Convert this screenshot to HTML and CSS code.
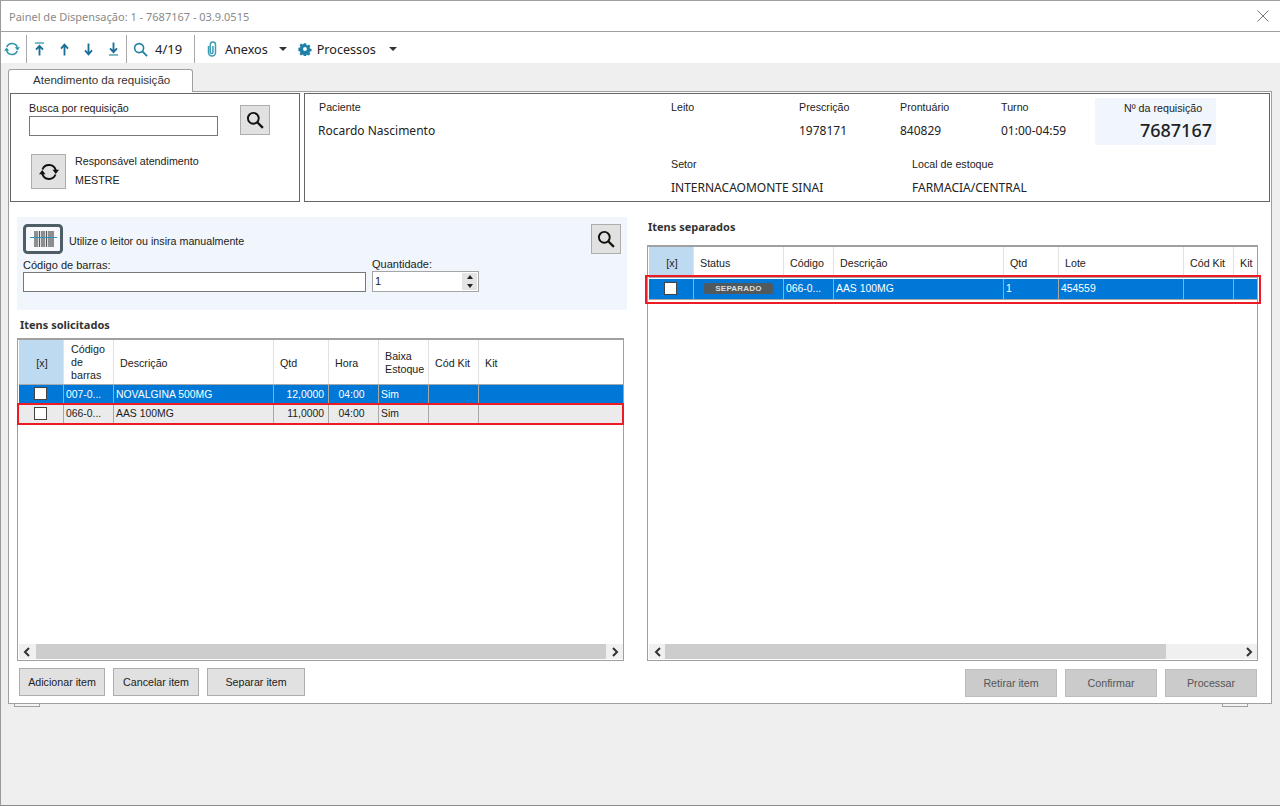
FILE: index.html
```html
<!DOCTYPE html>
<html lang="pt">
<head>
<meta charset="utf-8">
<title>Painel de Dispensação</title>
<link rel="stylesheet" href="styles.css">
</head>
<body>
<svg class="defs" width="0" height="0" aria-hidden="true">
  <defs>
    <symbol id="sync" viewBox="0 0 16 16"><path d="M2.8 6A5.6 5.6 0 0 1 13.4 6.6M13.2 10A5.6 5.6 0 0 1 2.6 9.4" fill="none" stroke="currentColor" stroke-width="1.6"/><path d="M10.8 6.2h5.2L13.4 9.6zM0 9.8h5.2L2.6 6.4z" fill="currentColor"/></symbol>
    <symbol id="glass" viewBox="0 0 16 16"><circle cx="6.5" cy="6.5" r="4.8" fill="none" stroke="currentColor" stroke-width="1.7"/><path d="M10 10l5 5" stroke="currentColor" stroke-width="2"/></symbol>
    <symbol id="chev-l" viewBox="0 0 8 10"><path d="M6 1L2 5l4 4" fill="none" stroke="currentColor" stroke-width="2"/></symbol>
    <symbol id="chev-r" viewBox="0 0 8 10"><path d="M2 1l4 4-4 4" fill="none" stroke="currentColor" stroke-width="2"/></symbol>
  </defs>
</svg>
<div class="window">
  <header class="titlebar">
    <span class="title">Painel de Dispensação: 1 - 7687167 - 03.9.0515</span>
    <svg class="close" width="12" height="12" viewBox="0 0 12 12"><path d="M.5.5l11 11M11.5.5l-11 11" stroke="#777" fill="none"/></svg>
  </header>
  <nav class="toolbar">
    <div class="tool-group tg-sync"><svg class="ti ti-sync"><use href="#sync"/></svg></div>
    <div class="tool-group tg-nav">
      <svg class="ti-nav" viewBox="0 0 12 16"><path d="M1 1.5h10" stroke="#3b93a8" stroke-width="1.4"/><path d="M6 15V5.5M2.2 8.8L6 4.6l3.8 4.2" fill="none" stroke="#1a6f96" stroke-width="2"/></svg>
      <svg class="ti-nav"  viewBox="0 0 12 16"><path d="M6 15V4M2.2 7.6L6 3.2l3.8 4.4" fill="none" stroke="#1a6f96" stroke-width="2"/></svg>
      <svg class="ti-nav" viewBox="0 0 12 16"><path d="M6 2v11M2.2 9.4L6 13.8l3.8-4.4" fill="none" stroke="#1a6f96" stroke-width="2"/></svg>
      <svg class="ti-nav" viewBox="0 0 12 16"><path d="M6 1v9.5M2.2 7.2L6 11.4l3.8-4.2" fill="none" stroke="#1a6f96" stroke-width="2"/><path d="M1 14.5h10" stroke="#3b93a8" stroke-width="1.4"/></svg>
    </div>
    <div class="tool-group tg-find"><svg class="ti ti-glass"><use href="#glass"/></svg><span class="count">4/19</span></div>
    <div class="tool-group tg-menu">
      <svg class="clip" viewBox="0 0 12 16"><path d="M2.5 5v6.5a3.5 3.5 0 0 0 7 0V3.6a2.6 2.6 0 0 0-5.2 0v7.6a1.3 1.3 0 0 0 2.6 0V5" fill="none" stroke="#3d9db4" stroke-width="1.5"/></svg>
      <span class="menu-label">Anexos</span><i class="caret"></i>
      <svg class="gear" viewBox="0 0 16 16"><path fill-rule="evenodd" fill="#1f80a8" d="M6.6 1h2.8l.4 2 1.3.6 1.8-1.1 1.9 2-1.1 1.7.5 1.3 2 .5v2.8l-2 .4-.6 1.3 1.1 1.8-2 1.9-1.7-1.1-1.3.5-.5 2H6.6l-.4-2-1.3-.6-1.8 1.1-1.9-2 1.1-1.7-.5-1.3-2-.5V6.6l2-.4.6-1.3L1.3 3.1l2-1.9L5 2.3l1.3-.5zM8 5.6a2.4 2.4 0 1 0 0 4.8 2.4 2.4 0 0 0 0-4.8z" transform="translate(.6 .6) scale(.92)"/></svg>
      <span class="menu-label">Processos</span><i class="caret caret-last"></i>
    </div>
  </nav>
  <div class="workspace">
    <div class="tabstrip"><div class="tab">Atendimento da requisição</div></div>
    <section class="tabpage">
      <div class="info-row">
        <div class="box box-search">
          <div class="search-row">
            <label class="field-search">
              <span class="lbl">Busca por requisição</span>
              <span class="input input-req"></span>
            </label>
            <button class="icon-btn btn-search-req"><svg class="bi"><use href="#glass"/></svg></button>
          </div>
          <div class="resp-row">
            <button class="icon-btn btn-refresh"><svg class="bi-sync"><use href="#sync"/></svg></button>
            <div class="resp-text"><span>Responsável atendimento</span><span>MESTRE</span></div>
          </div>
        </div>
        <div class="box box-patient">
          <div class="pt-row">
            <div class="pt pt-name"><span class="pad1">Paciente</span><b class="val">Rocardo Nascimento</b></div>
            <div class="pt pt-leito"><span>Leito</span></div>
            <div class="pt pt-presc"><span>Prescrição</span><b class="val">1978171</b></div>
            <div class="pt pt-pront"><span>Prontuário</span><b class="val">840829</b></div>
            <div class="pt pt-turno"><span>Turno</span><b class="val">01:00-04:59</b></div>
            <div class="req-box"><span>Nº da requisição</span><strong>7687167</strong></div>
          </div>
          <div class="pt-row pt-row2">
            <div class="pt pt-setor"><span>Setor</span><b class="val">INTERNACAOMONTE SINAI</b></div>
            <div class="pt"><span>Local de estoque</span><b class="val">FARMACIA/CENTRAL</b></div>
          </div>
        </div>
      </div>
      <div class="columns">
        <div class="col-left">
          <div class="scan-panel">
            <div class="scan-head">
              <svg class="barcode" viewBox="0 0 40 30"><rect x="1.5" y="1.5" width="37" height="27" rx="3" fill="#f7f9fc" stroke="#4d5e66" stroke-width="3"/><path d="M12 7v16M14 7v16M16.5 7v16M19 7v16M21 7v16M23.5 7v16M26 7v16M28 7v16M30 7v16" stroke="#555" stroke-width="1.3"/><path d="M7 13.5h27" stroke="#2f93b5"/></svg>
              <span class="scan-hint">Utilize o leitor ou insira manualmente</span>
              <button class="icon-btn btn-search-scan"><svg class="bi"><use href="#glass"/></svg></button>
            </div>
            <div class="scan-fields">
              <label class="f-code"><span>Código de barras:</span><span class="input input-code"></span></label>
              <label class="f-qty"><span>Quantidade:</span>
                <span class="input input-qty">1<span class="spin"><i class="sp sp-up"></i><i class="sp sp-down"></i></span></span>
              </label>
            </div>
          </div>
          <h2 class="sec sec-left">Itens solicitados</h2>
          <div class="grid grid-left">
            <div class="gh gl"><span class="chk-h">[x]</span><span class="t2">Código de barras</span><span>Descrição</span><span>Qtd</span><span>Hora</span><span class="t3">Baixa Estoque</span><span>Cód Kit</span><span>Kit</span></div>
            <div class="gr gl sel"><span class="cc"><i class="cb"></i></span><span>007-0...</span><span>NOVALGINA 500MG</span><span class="r">12,0000</span><span class="c">04:00</span><span>Sim</span><span></span><span></span></div>
            <div class="gr gl alt mark"><span class="cc"><i class="cb"></i></span><span>066-0...</span><span>AAS 100MG</span><span class="r">11,0000</span><span class="c">04:00</span><span>Sim</span><span></span><span></span></div>
            <div class="gfill"></div>
            <div class="hs hs-left"><span class="ar"><svg class="chev"><use href="#chev-l"/></svg></span><span class="thumb"></span><span class="ar"><svg class="chev"><use href="#chev-r"/></svg></span></div>
          </div>
          <div class="btns">
            <button class="btn w86">Adicionar item</button>
            <button class="btn w86">Cancelar item</button>
            <button class="btn w98">Separar item</button>
          </div>
        </div>
        <div class="col-right">
          <h2 class="sec sec-right">Itens separados</h2>
          <div class="grid grid-right">
            <div class="gh gs"><span class="chk-h">[x]</span><span>Status</span><span>Código</span><span>Descrição</span><span>Qtd</span><span>Lote</span><span>Cód Kit</span><span>Kit</span></div>
            <div class="gr gs sel mark mark-s"><span class="cc"><i class="cb"></i></span><span class="cc"><em class="badge">SEPARADO</em></span><span>066-0...</span><span>AAS 100MG</span><span>1</span><span>454559</span><span></span><span></span></div>
            <div class="gfill"></div>
            <div class="hs hs-right"><span class="ar"><svg class="chev"><use href="#chev-l"/></svg></span><span class="thumb"></span><span class="ar"><svg class="chev"><use href="#chev-r"/></svg></span></div>
          </div>
          <div class="btns btns-right">
            <button class="btn off">Retirar item</button>
            <button class="btn off">Confirmar</button>
            <button class="btn off">Processar</button>
          </div>
        </div>
      </div>
    </section>
    <div class="stubs"><i class="stub"></i><i class="stub"></i></div>
  </div>
</div>
</body>
</html>
```

FILE: styles.css
```css
* { box-sizing: border-box; }
html, body { margin: 0; padding: 0; height: 100%; overflow: hidden; }
body { font: 10.7px/14px "Liberation Sans", "Noto Sans", sans-serif; color: #222; background: #efefef; }
.defs { position: absolute; }
.window { width: 1280px; height: 806px; background: #efefef; border-left: 1px solid #9a9a9a; border-bottom: 1px solid #8a8a8a; display: flex; flex-direction: column; }

.titlebar { height: 32px; flex: none; background: #fff; border-top: 1px solid #a0a0a0; border-bottom: 1px solid #a0a0a0; display: flex; align-items: center; justify-content: space-between; padding: 0 11px 0 8px; }
.title { color: #8a8a8a; font: 11px "Noto Sans", sans-serif; }
.toolbar { height: 31px; flex: none; background: #fff; display: flex; align-items: stretch; padding: 3px 0 0; }
.tool-group { display: flex; align-items: center; border-right: 1px solid #a8a8a8; }
.tg-sync { width: 26px; padding-left: 3px; }
.ti { display: block; }
.ti-sync { width: 16px; height: 16px; color: #2a95a8; }
.tg-nav { width: 100px; padding-left: 7px; gap: 13.5px; }
.ti-nav { width: 11px; height: 16px; flex: none; }
.tg-find { width: 68px; padding-left: 6px; gap: 7px; }
.ti-glass { width: 15px; height: 15px; color: #1f80a0; }
.count { font: 13px "Noto Sans", sans-serif; color: #222; }
.tg-menu { border: 0; padding-left: 11px; }
.clip { width: 12px; height: 16px; margin-right: 7px; }
.menu-label { font: 12.6px "Noto Sans", sans-serif; color: #222; }
.caret { width: 0; height: 0; border: 4px solid transparent; border-top: 4px solid #333; border-bottom: 0; margin-left: 11px; margin-right: 11px; }
.caret-last { margin-left: 13px; }
.gear { width: 14px; height: 14px; margin-right: 5px; }

.workspace { flex: 1; padding: 6px 0 0 7px; display: flex; flex-direction: column; }
.tabstrip { height: 22px; display: flex; position: relative; z-index: 1; }
.tab { width: 185px; height: 23px; background: #fff; border: 1px solid #a0a0a0; border-bottom: 0; border-radius: 3px 3px 0 0; padding: 3px 0 0 24px; color: #333; font-size: 11.6px; }
.tabpage { width: 1264px; height: 613px; flex: none; background: #fff; border: 1px solid #a0a0a0; padding: 1px 1px 0 1px; }

.info-row { display: flex; gap: 4px; height: 110px; }
.box { border: 1px solid #666; background: #fff; height: 109px; }
.box-search { width: 290px; padding: 7px 0 0 18px; }
.search-row { display: flex; }
.field-search { display: flex; flex-direction: column; width: 189px; }
.lbl { display: block; height: 15px; }
.input { display: block; background: #fff; border: 1px solid #777; }
.input-req { height: 20px; }
.icon-btn { padding: 0; background: #e1e1e1; border: 1px solid #adadad; display: flex; align-items: center; justify-content: center; color: #111; }
.btn-search-req { width: 30px; height: 30px; margin: 4px 0 0 22px; }
.bi { width: 18px; height: 18px; }
.bi-sync { width: 20px; height: 20px; }
.resp-row { display: flex; margin: 18px 0 0 2px; }
.btn-refresh { width: 35px; height: 35px; }
.resp-text { display: flex; flex-direction: column; margin-left: 9px; gap: 5px; }
.box-patient { width: 966px; padding: 4px 0 0 13px; }
.pt-row { display: flex; }
.pt { display: flex; flex-direction: column; gap: 9px; padding-top: 2px; }
.pad1 { padding-left: 1px; }
.val { font: 400 12px/16px "Noto Sans", sans-serif; }
.pt-name { width: 353px; }
.pt-leito { width: 128px; }
.pt-presc, .pt-pront { width: 101px; }
.pt-turno { width: 94px; }
.req-box { width: 121px; height: 47px; background: #f1f6fd; display: flex; flex-direction: column; padding: 3px 4px 0 29px; }
.req-box strong { font: 500 18px/24px "Noto Sans", sans-serif; text-align: right; margin-top: 3px; }
.pt-row2 { padding-left: 353px; margin-top: 10px; }
.pt-setor { width: 241px; }

.columns { display: flex; padding: 14px 0 0 7px; gap: 20px; }
.col-left { width: 610px; }
.col-right { width: 614px; }
.scan-panel { height: 93px; background: #f1f6fd; padding: 7px 6px 0 6px; }
.scan-head { display: flex; align-items: center; height: 30px; }
.barcode { width: 40px; height: 30px; flex: none; }
.scan-hint { margin-left: 6px; flex: 1; padding-top: 4px; }
.btn-search-scan { width: 30px; height: 30px; }
.scan-fields { display: flex; gap: 6px; padding-top: 4px; font-size: 11px; }
.f-code { display: flex; flex-direction: column; width: 343px; }
.f-qty { display: flex; flex-direction: column; width: 107px; margin-top: -1px; }
.input-code { height: 20px; }
.input-qty { height: 21px; border-color: #a5a5a5; padding-left: 2px; position: relative; line-height: 19px; }
.spin { position: absolute; right: 1px; top: 1px; width: 15px; height: 17px; background: #e4e4e4; display: flex; flex-direction: column; justify-content: space-around; align-items: center; }
.sp { width: 0; height: 0; border: 3px solid transparent; }
.sp-up { border-top: 0; border-bottom: 4px solid #222; }
.sp-down { border-bottom: 0; border-top: 4px solid #222; }

.sec { margin: 0; font: 700 11px/14px "Noto Sans", sans-serif; color: #333; }
.sec-left { padding: 8px 0 0 3px; height: 28px; }
.sec-right { padding: 3px 0 0 1px; height: 28px; }
.grid { border: 1px solid #a0a0a0; border-top: 2px solid #a0a0a0; display: flex; flex-direction: column; height: 323px; padding: 0 0 1px 1px; background: #fff; }
.grid-left { width: 607px; }
.grid-right { width: 611px; height: 416px; }
.gl { display: grid; grid-template-columns: 45px 50px 160px 55px 50px 50px 50px 1fr; }
.gs { display: grid; grid-template-columns: 45px 90px 50px 170px 55px 125px 50px 1fr; }
.gh > span { border-right: 1px solid #e2e2e2; display: flex; align-items: center; padding: 1px 0 0 6px; }
.gh { border-bottom: 1px solid #a8a8a8; }
.gh > span:last-child { border-right: 0; }
.gl.gh { height: 45px; }
.gs.gh { height: 31px; }
.gh .chk-h { background: #bedaf1; justify-content: center; padding: 1px 0 0 2px; }
.t2, .t3 { line-height: 13px; }
.gh .t2 { padding-left: 7px; }
.gr { height: 19px; line-height: 18px; border-bottom: 1px solid #a8a8a8; }
.gr > span { border-right: 1px solid #a8a8a8; padding: 1px 4px 0 2px; white-space: nowrap; overflow: hidden; font: 10.4px/18px "Liberation Sans", sans-serif; }
.gr > span:last-child { border-right: 0; }
.gr .r { text-align: right; }
.gr .c { text-align: center; padding-left: 0; }
.sel { background: #0078d7; color: #fff; }
.alt { background: #ebebeb; }
.gr .cc { display: flex; align-items: center; justify-content: center; padding: 0 0 1px; }
.cb { width: 13px; height: 13px; background: #fff; border: 1px solid #444; display: block; margin-right: 2px; }
.mark { outline: 2px solid #ed1c24; outline-offset: -1px; position: relative; }
.gl.mark { margin-left: -1px; width: 605px; padding-left: 1px; height: 20px; grid-template-columns: 45px 50px 160px 55px 50px 50px 50px 1fr; }
.gs.sel { margin-top: 1px; height: 21px; }
.mark-s { outline-offset: 2px; }
.badge { font: 700 8px/11px "Liberation Sans", sans-serif; letter-spacing: .2px; background: #50595d; color: #ddd; border-radius: 2px; width: 69px; text-align: center; }
.gfill { flex: 1; }
.hs { height: 15px; flex: none; display: flex; background: #f0f0f0; align-items: stretch; }
.ar { width: 17px; display: flex; align-items: center; justify-content: center; color: #333; }
.chev { width: 8px; height: 10px; }
.hs-left .thumb { width: 572px; background: #cdcdcd; }
.hs-right .thumb { width: 501px; background: #cdcdcd; margin-left: -1px; }
.hs .ar:last-child { margin-left: auto; }

.btns { display: flex; gap: 8px; padding: 7px 0 0 2px; }
.btn { height: 28px; padding: 0; font: inherit; color: #222; background: #e1e1e1; border: 1px solid #adadad; }
.w86 { width: 86px; }
.w98 { width: 98px; }
.btns-right { justify-content: flex-end; padding: 8px 0 0; width: 610px; }
.off { width: 92px; background: #cbcbcb; color: #555; border-color: #bdbdbd; }

.stubs { display: flex; justify-content: space-between; width: 1234px; margin-left: 6px; }
.stub { width: 26px; height: 3px; background: #f4f4f4; border: 1px solid #a0a0a0; border-top: 0; }
```
